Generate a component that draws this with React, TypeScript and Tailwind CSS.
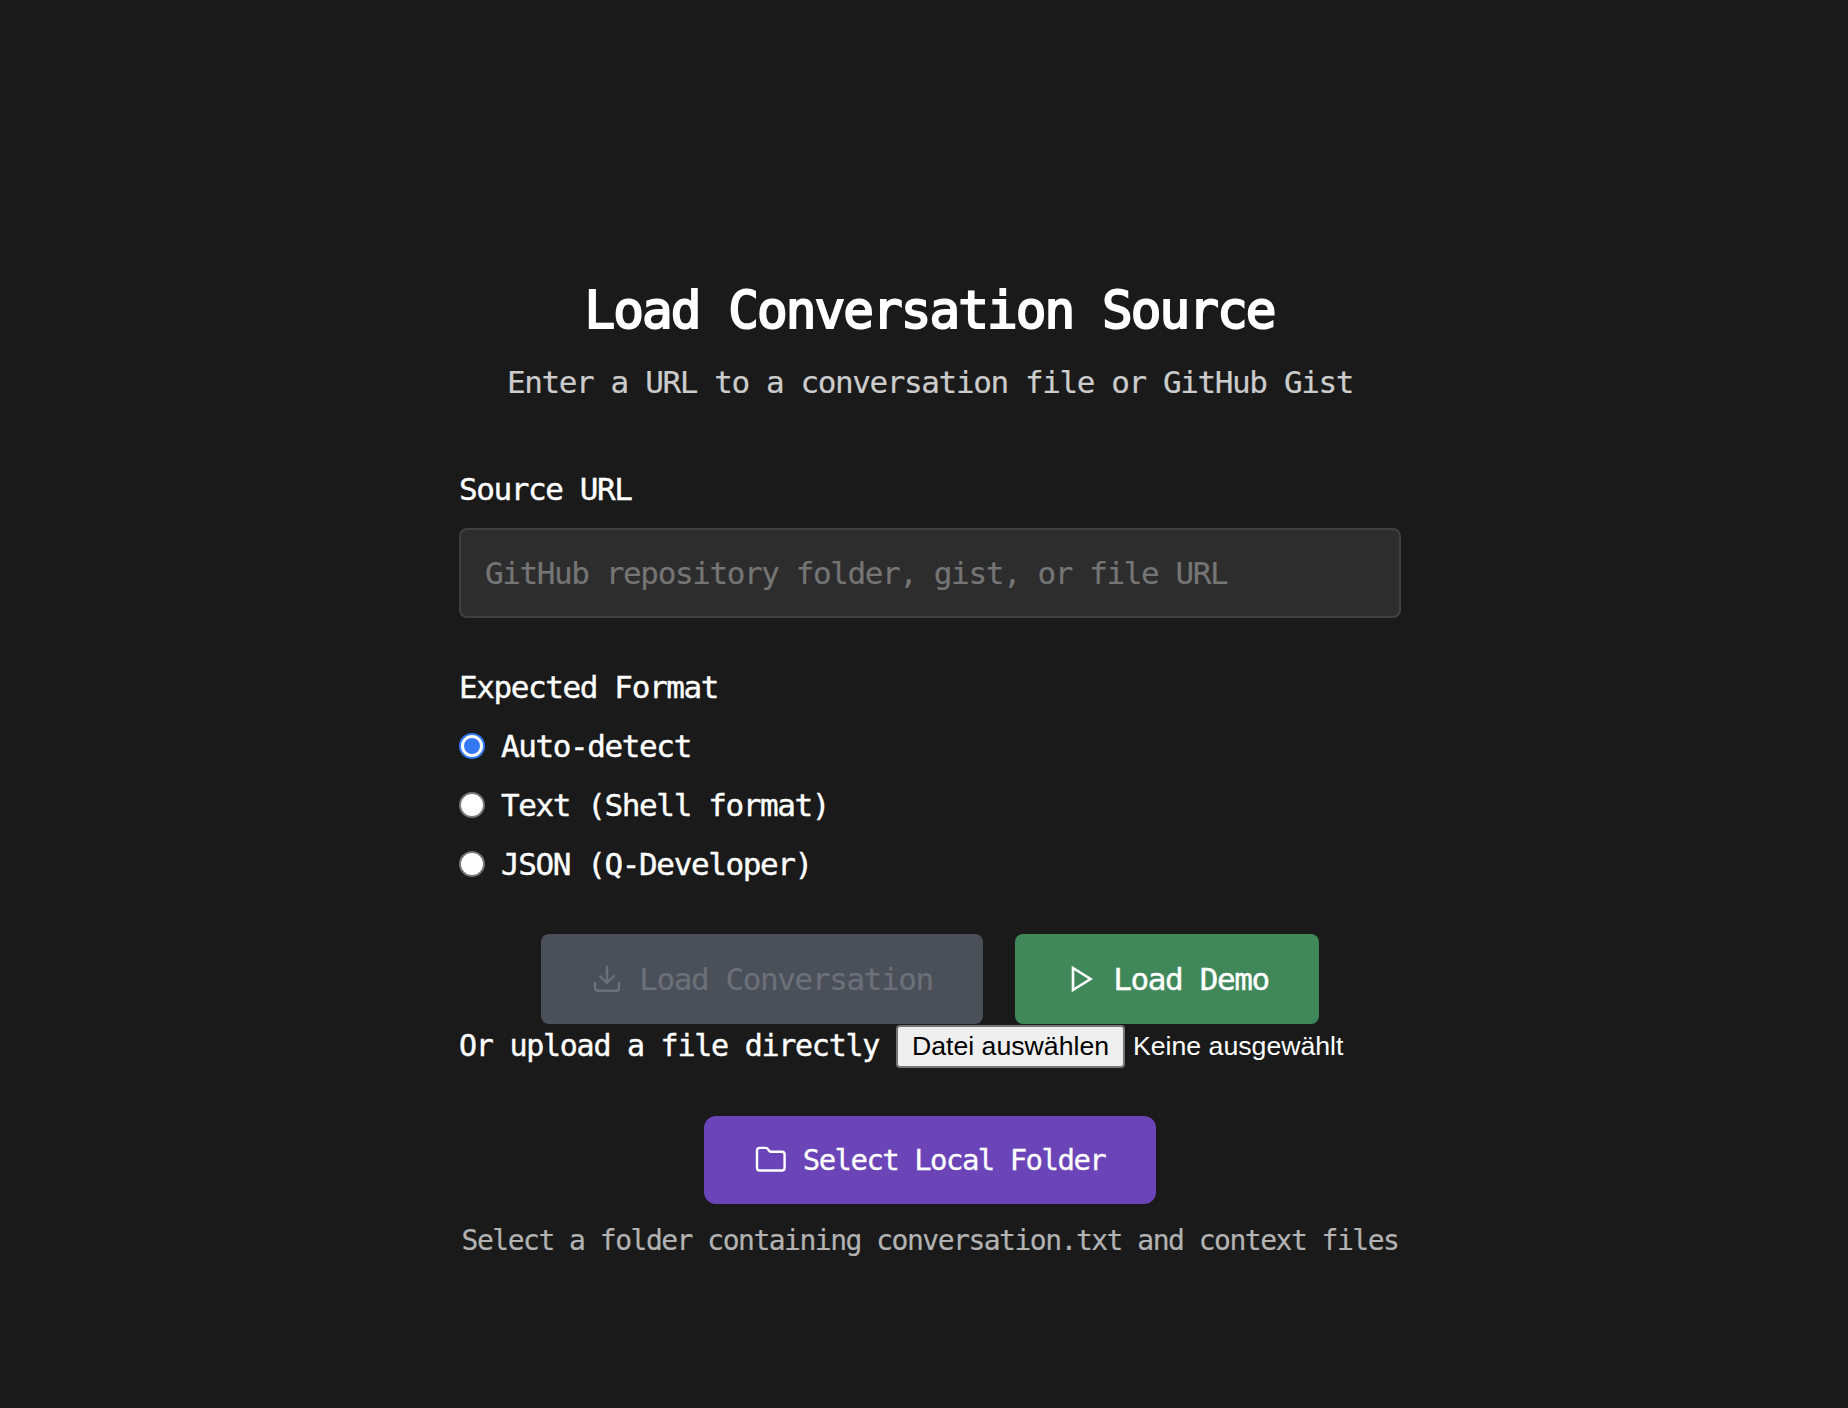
import React from "react";

const body = "text-[31px] leading-[40px] tracking-[-1.4px]";
const light = "[-webkit-text-stroke:0.2px_currentColor]";
const medium = "[-webkit-text-stroke:0.4px_currentColor]";

function Radio({ label, checked }: { label: string; checked?: boolean }) {
  return (
    <label className="flex h-10 items-center gap-4">
      <span
        className={
          checked
            ? "flex size-[26px] shrink-0 items-center justify-center rounded-full border-2 border-[#3478f6] bg-white"
            : "flex size-[26px] shrink-0 rounded-full border-2 border-[#767676] bg-white"
        }
      >
        {checked && <span className="size-4 rounded-full bg-[#3478f6]" />}
      </span>
      <span className={`${body} ${medium}`}>{label}</span>
    </label>
  );
}

function DownloadIcon() {
  return (
    <svg className="size-8 shrink-0" viewBox="0 0 32 32" fill="none" stroke="currentColor" strokeWidth="2.4" strokeLinecap="round" strokeLinejoin="round">
      <path d="M4 20v5a2.7 2.7 0 0 0 2.7 2.7h18.6A2.7 2.7 0 0 0 28 25v-5M16 4v16M9.2 13.2l6.8 6.8 6.8-6.8" />
    </svg>
  );
}

function PlayIcon() {
  return (
    <svg className="size-8 shrink-0" viewBox="0 0 32 32" fill="none" stroke="currentColor" strokeWidth="2.6" strokeLinejoin="miter">
      <path d="M8 5v22l17.5-11z" />
    </svg>
  );
}

function FolderIcon() {
  return (
    <svg className="size-8 shrink-0" viewBox="0 0 32 32" fill="none" stroke="currentColor" strokeWidth="2.4" strokeLinejoin="round">
      <path d="M2 6.7a2.8 2.8 0 0 1 2.8-2.8h5.9a2.8 2.8 0 0 1 2.3 1.2l1.1 1.6a2.4 2.4 0 0 0 2 1H26.8a2.8 2.8 0 0 1 2.8 2.8v13.2a2.8 2.8 0 0 1-2.8 2.8H4.8A2.8 2.8 0 0 1 2 23.7z" />
    </svg>
  );
}

export default function App() {
  return (
    <div className="h-[1408px] w-[1848px] overflow-hidden bg-[#1a1a1a] pl-[459px] pt-[279px] font-['DejaVu_Sans_Mono',monospace] text-white">
      <main className="flex w-[942px] flex-col whitespace-nowrap">
        <h1 className="mr-px text-center text-[51px] leading-[64px] tracking-[-1.96px] [-webkit-text-stroke:2px_currentColor]">
          Load Conversation Source
        </h1>
        <p className={`mt-[19px] text-center text-[#cccccc] ${body} ${light}`}>
          Enter a URL to a conversation file or GitHub Gist
        </p>

        <label className={`mt-[67px] ${body} ${medium}`}>Source URL</label>
        <input
          className={`mt-[19px] h-[90px] w-full rounded-lg border-2 border-[#404040] bg-[#2d2d2d] px-6 placeholder:text-[#757575] ${body} ${light}`}
          placeholder="GitHub repository folder, gist, or file URL"
        />

        <div className={`mt-[49px] ${body} ${medium}`}>Expected Format</div>
        <div className="mt-[19px] flex flex-col gap-[19px]">
          <Radio label="Auto-detect" checked />
          <Radio label="Text (Shell format)" />
          <Radio label="JSON (Q-Developer)" />
        </div>

        <div className="mt-[50px] flex justify-center gap-8">
          <button className={`flex h-[90px] w-[442px] items-center justify-center gap-4 rounded-lg bg-[#4b4f58] text-[#6b7079] ${body} ${light}`}>
            <DownloadIcon />
            Load Conversation
          </button>
          <button className={`flex h-[90px] w-[304px] items-center justify-center gap-4 rounded-lg bg-[#40875a] ${body} ${medium}`}>
            <PlayIcon />
            Load Demo
          </button>
        </div>

        <div className="flex h-[44px] items-start">
          <span className={`mt-0.5 w-[421px] text-[30px] leading-[40px] tracking-[-1.26px] ${medium}`}>
            Or upload a file directly
          </span>
          <span className="ml-4 mt-px flex h-[43px] w-[229px] items-center justify-center rounded-[4px] border-2 border-[#767676] bg-[#efefef] font-['Liberation_Sans',Arial,sans-serif] text-[26.67px] leading-none text-black">
            Datei auswählen
          </span>
          <span className="ml-2 mt-px flex h-[43px] items-center font-['Liberation_Sans',Arial,sans-serif] text-[26.67px] leading-none">
            Keine ausgewählt
          </span>
        </div>

        <button className="mt-12 flex h-[88px] w-[452px] items-center justify-center gap-4 self-center rounded-xl bg-[#6b44b8] text-[29px] leading-[40px] tracking-[-1.54px] [-webkit-text-stroke:0.3px_currentColor]">
          <FolderIcon />
          Select Local Folder
        </button>
        <p className="mt-[17px] text-center text-[28px] leading-[40px] tracking-[-1.5px] text-[#b3b3b3] [-webkit-text-stroke:0.2px_currentColor]">
          Select a folder containing conversation.txt and context files
        </p>
      </main>
    </div>
  );
}
